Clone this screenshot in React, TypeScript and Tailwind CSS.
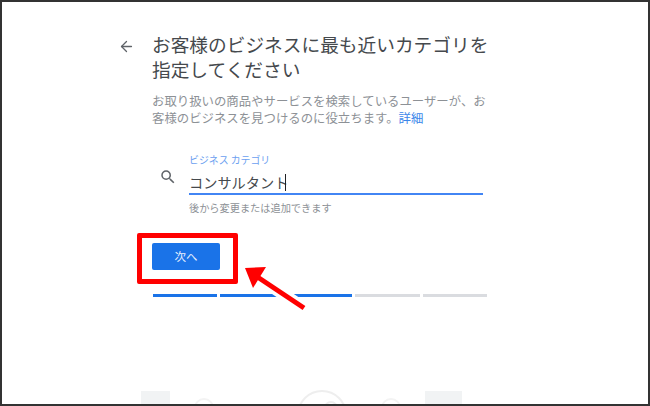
import React from 'react';
import { ArrowLeft } from 'lucide-react';

const font = { fontFamily: '"Noto Sans CJK JP", "Liberation Sans", sans-serif' };

const steps = ['bg-[#1a73e8]', 'bg-[#1a73e8]', 'bg-[#1a73e8]', 'bg-[#dadce0]', 'bg-[#dadce0]'];

const App: React.FC = () => {
  return <div className="relative h-[406px] w-[650px] overflow-hidden border-2 border-[#333333] bg-white" style={font}>
      <div className="ml-[116px] flex pt-[29px]">
        {/* 戻る */}
        <div className="w-[34px] pt-[7px]">
          <ArrowLeft className="h-[17px] w-[17px] text-[#5f6368]" strokeWidth={1.8} />
        </div>
        <div className="w-[340px]">
          <h1 className="text-[18.7px] leading-[25px] font-normal text-[#45494d]">お客様のビジネスに最も近いカテゴリを<br />指定してください</h1>
          <p className="mt-[12px] text-[12.4px] leading-[17px] text-[#8d9196]">
            お取り扱いの商品やサービスを検索しているユーザーが、お<br />客様のビジネスを見つけるのに役立ちます。<span className="text-[#3b86ea]">詳細</span>
          </p>
        </div>
      </div>

      {/* 入力欄 */}
      <div className="mt-[27px] ml-[157px] flex">
        <svg className="mt-[14px] mr-[12px] h-[18px] w-[18px]" viewBox="0 0 24 24" fill="#5f6368">
          <path d="M15.5 14h-.79l-.28-.27A6.47 6.47 0 0 0 16 9.5 6.5 6.5 0 1 0 9.5 16c1.61 0 3.09-.59 4.23-1.57l.27.28v.79l5 4.99L20.49 19l-4.99-5zm-6 0C7.01 14 5 11.99 5 9.5S7.01 5 9.5 5 14 7.01 14 9.5 11.99 14 9.5 14z" />
        </svg>
        <div className="w-[294px]">
          <div className="text-[9.9px] leading-[12px] text-[#6ba0f0]">ビジネス カテゴリ</div>
          <div className="flex h-[29px] items-center border-b-2 border-[#4285f4] pt-[6px] text-[14.2px] text-[#45494d]">
            コンサルタント<span className="-ml-[3px] h-[17px] w-px bg-[#202124]" />
          </div>
          <div className="mt-[6px] text-[10.2px] leading-[14px] text-[#8d9196]">後から変更または追加できます</div>
        </div>
      </div>

      {/* 次へ */}
      <button className="mt-[28px] ml-[150px] block h-[27px] w-[68px] rounded-[2px] bg-[#1a73e8] text-[11.5px] text-[#e8f0fe]">次へ</button>

      {/* 進捗 */}
      <div className="mt-[24px] ml-[151px] flex w-[334px] gap-[3px]">
        {steps.map((c, i) => <div key={i} className={`h-[3px] flex-1 ${c}`} />)}
      </div>

      {/* 注釈 */}
      <div className="absolute top-[231px] left-[135px] h-[51px] w-[101px] rounded-[2px] border-[5px] border-[#ff0000]" />
      <svg className="absolute top-[0px] left-[0px]" width="646" height="402" viewBox="2 2 646 402">
        <path d="M304 308 L256 276" stroke="#ffffff" strokeWidth="12" fill="none" />
        <path d="M304 308 L256 276" stroke="#ff0000" strokeWidth="5" fill="none" />
        <path d="M245 268 L266 267 L253 288 Z" fill="#ff0000" />
      </svg>

      {/* 下端の切れた図 */}
      <div className="absolute top-[389px] left-[139px] h-[20px] w-[29px] bg-[#f1f3f4]" />
      <div className="absolute top-[389px] left-[423px] h-[20px] w-[37px] bg-[#f1f3f4]" />
      <svg className="absolute top-[0px] left-[0px]" width="646" height="402" viewBox="2 2 646 402">
        <circle cx="322" cy="415" r="24" stroke="#eeeeee" strokeWidth="2" fill="none" />
        <circle cx="331" cy="408" r="6" stroke="#eeeeee" strokeWidth="2" fill="none" />
        <circle cx="204" cy="408" r="9" stroke="#f3f3f3" strokeWidth="2" fill="none" />
        <circle cx="391" cy="408" r="9" stroke="#f3f3f3" strokeWidth="2" fill="none" />
      </svg>
    </div>;
};
export default App;
